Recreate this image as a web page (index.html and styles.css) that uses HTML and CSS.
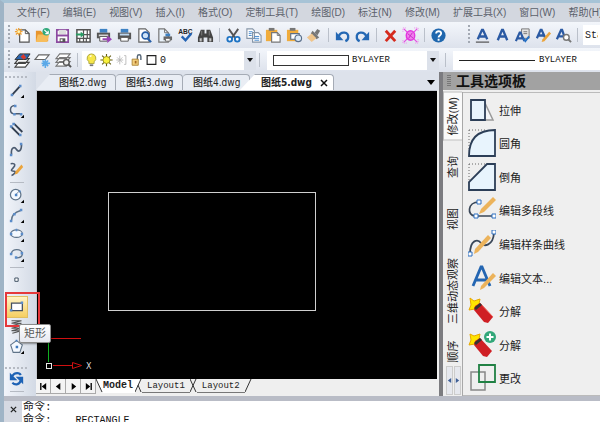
FILE: index.html
```html
<!DOCTYPE html>
<html lang="zh-CN">
<head>
<meta charset="utf-8">
<title>CAD</title>
<link rel="stylesheet" href="styles.css">
</head>
<body>
<div class="app">
  <nav class="menu">
    <a href="#">文件(F)</a><a href="#">编辑(E)</a><a href="#">视图(V)</a><a href="#">插入(I)</a><a href="#">格式(O)</a><a href="#">定制工具(T)</a><a href="#">绘图(D)</a><a href="#">标注(N)</a><a href="#">修改(M)</a><a href="#">扩展工具(X)</a><a href="#">窗口(W)</a><a href="#">帮助(H)</a>
  </nav>

  <div class="toolbar">
    <span class="grip"></span>
    <div class="group g10">
      <button aria-label="新建"><svg viewBox="0 0 18 18"><path d="M6 3h6l4 4v9H6z" fill="#fff" stroke="#555" stroke-width="1.3"/><path d="M12 3v4h4" fill="none" stroke="#555"/><path d="M5 1v8M1 5h8M2 2l6 6M8 2L2 8" stroke="#f0a030" stroke-width="1.3"/><circle cx="5" cy="5" r="1.5" fill="#fff3b0"/></svg></button>
      <button aria-label="打开"><svg viewBox="0 0 18 18"><path d="M2 4h5l2 2h6v9H2z" fill="#e8952c"/><path d="M4 8h12l-2 8H2z" fill="#f7bd5c"/><circle cx="13" cy="5" r="4" fill="#2fa87a"/><path d="M11 3l4 4M15 4v3h-3" stroke="#fff" stroke-width="1.3" fill="none"/></svg></button>
      <button aria-label="保存"><svg viewBox="0 0 18 18"><path d="M3 3h12v13H3z" fill="#fff" stroke="#8c4aa0" stroke-width="1.8"/><path d="M5 3h8v5H5z" fill="#ddd"/><path d="M3 9h12" stroke="#8c4aa0" stroke-width="2"/><path d="M6 12h6v4H6z" fill="#555"/><path d="M7 13h2v2H7z" fill="#fff"/></svg></button>
      <button aria-label="图纸"><svg viewBox="0 0 18 18"><path d="M2 3h14v13H2z" fill="#fff" stroke="#555" stroke-width="1.6"/><path d="M9 3v13M2 12h14M12 12v4M5 12v4M13 3v9M9 8h7" stroke="#555" stroke-width="1.3"/><path d="M1 7h5V5l4 3-4 3V9H1z" fill="#299b63"/></svg></button>
      <button aria-label="输出"><svg viewBox="0 0 18 18"><path d="M5 2h8v4H5z" fill="#3d82c4"/><path d="M2 6h14v6H2z" fill="#555"/><path d="M4 8h10v2H4z" fill="#ddd"/><path d="M5 10h8v5H5z" fill="#fff" stroke="#555"/><path d="M8 12h5v-3l5 4-5 4v-3H8z" fill="#9a43b6"/></svg></button>
      <button aria-label="打印"><svg viewBox="0 0 18 18"><path d="M5 2h8v4H5z" fill="#3d82c4"/><path d="M2 6h14v7H2z" fill="#555"/><path d="M4 7h10v2H4z" fill="#bcd7ef"/><path d="M5 11h8v4H5z" fill="#fff" stroke="#555"/></svg></button>
      <button aria-label="打印预览"><svg viewBox="0 0 18 18"><path d="M3 2h7l4 4v10H3z" fill="#fff" stroke="#666" stroke-width="1.3"/><circle cx="10" cy="9" r="3.6" fill="#cfe4f8" stroke="#275fa8" stroke-width="1.7"/><path d="M12 12l4 4" stroke="#275fa8" stroke-width="2.2"/></svg></button>
      <button aria-label="页面设置"><svg viewBox="0 0 18 18"><path d="M3 2h6l4 4v10H3z" fill="#eaf3fb" stroke="#777" stroke-width="1.3"/><path d="M9 2v4h4" fill="none" stroke="#777"/><path d="M10 7h5v3h-5z" fill="#3d82c4"/><path d="M8 10h9v4H8z" fill="#666"/><path d="M10 12h5v3h-5z" fill="#fff" stroke="#666"/></svg></button>
      <button aria-label="拼写检查"><svg viewBox="0 0 18 18"><text x="9" y="7" class="abc">ABC</text><path d="M5 10l4 4 6-7" fill="none" stroke="#2464b4" stroke-width="2.5"/></svg></button>
      <button aria-label="查找"><svg viewBox="0 0 18 18"><path d="M4 3h4v4h2V3h4l3 8v5h-6v-5H7v5H1v-5z" fill="#444"/><path d="M3 12h2v3H3zM13 12h2v3h-2zM5 4v5M13 4v5" fill="#ddd" stroke="#999" stroke-width=".7"/></svg></button>
    </div>
    <span class="sep"></span>
    <div class="group g5">
      <button aria-label="剪切"><svg viewBox="0 0 18 18"><path d="M4 2l7 10M14 2L7 12" stroke="#555" stroke-width="2"/><circle cx="5" cy="13" r="2.5" fill="#fff" stroke="#1f74c4" stroke-width="2"/><circle cx="13" cy="13" r="2.5" fill="#fff" stroke="#1f74c4" stroke-width="2"/></svg></button>
      <button aria-label="复制"><svg viewBox="0 0 18 18"><path d="M2 2h6l2 2v8H2zM8 6h6l3 3v7H8z" fill="#fff" stroke="#8796a8" stroke-width="1.2"/><path d="M4 5h4M4 7h3M4 9h3M10 10h5M10 12h5M10 14h5" stroke="#4287cc"/></svg></button>
      <button aria-label="粘贴"><svg viewBox="0 0 18 18"><path d="M1 3h12v12H1z" fill="#f0ac3c"/><path d="M4 1h6v3H4z" fill="#777"/><path d="M7 6h6l3 3v7H7z" fill="#fff" stroke="#777" stroke-width="1.2"/><path d="M13 6v3h3" fill="none" stroke="#777"/></svg></button>
      <button aria-label="选择性粘贴"><svg viewBox="0 0 18 18"><path d="M1 3h12v12H1z" fill="#f0ac3c"/><path d="M4 1h6v3H4z" fill="#777"/><path d="M5 7h9v6H5z" fill="#fff" stroke="#5a6f8a" stroke-width="1.2"/><circle cx="13" cy="12" r="3.5" fill="#dbe9f7" stroke="#5a6f8a" stroke-width="1.2"/></svg></button>
      <button aria-label="格式刷"><svg viewBox="0 0 18 18"><path d="M12 2l3 2-3 5-3-3z" fill="#777"/><path d="M7 4l7 7-3 2-6-6z" fill="#777"/><path d="M6 7l5 5-5 4-5-5z" fill="#efc58c"/></svg></button>
    </div>
    <span class="sep"></span>
    <div class="group g2">
      <button aria-label="撤销"><svg viewBox="0 0 18 18"><path d="M5 10c2-6 11-5 10 1 0 2-1 3-3 4" fill="none" stroke="#2468b4" stroke-width="2.5"/><path d="M2 5v9h8z" fill="#2468b4"/></svg></button>
      <button aria-label="重做"><svg viewBox="0 0 18 18"><path d="M13 10C11 4 2 5 3 11c0 2 1 3 3 4" fill="none" stroke="#2468b4" stroke-width="2.5"/><path d="M16 5v9H8z" fill="#2468b4"/></svg></button>
    </div>
    <span class="sep"></span>
    <div class="group g2">
      <button aria-label="删除"><svg viewBox="0 0 18 18"><path d="M4 4l10 11M14 4L4 15" stroke="#d52b1e" stroke-width="3"/></svg></button>
      <button aria-label="清理"><svg viewBox="0 0 18 18"><path d="M2 2l14 14M16 2L2 16" stroke="#e64be4" stroke-width="1.3"/><ellipse cx="9" cy="9" rx="4.500" ry="5" fill="#ef7fec" stroke="#e336df" stroke-width="1.5"/><path d="M6 7l6 5M7 12l4-6" stroke="#c92ac6"/><path d="M1 5V1h4M13 1h4v4M17 13v4h-4M5 17H1v-4" fill="none" stroke="#ef7fec" stroke-dasharray="1 1"/></svg></button>
    </div>
    <span class="sep"></span>
    <div class="group g1">
      <button aria-label="帮助"><svg viewBox="0 0 18 18"><circle cx="9" cy="9" r="7.5" fill="#1f67ae"/><path d="M6.500 7c0-3.500 5.500-3.300 5.300 0 0 2-2.700 2-2.700 4M9.100 12.500v2" fill="none" stroke="#fff" stroke-width="2"/></svg></button>
    </div>
    <span class="grip grip-far"></span>
    <div class="group g5">
      <button aria-label="文字"><svg viewBox="0 0 18 18"><path d="M4 13L8.500 3h1L14 13M6 10h6" fill="none" stroke="#2b5aa3" stroke-width="2.5"/><path d="M2 16h14" stroke="#555" stroke-width="1.3"/></svg></button>
      <button aria-label="单行文字"><svg viewBox="0 0 18 18"><path d="M4 14L8.500 3h1L14 14M6 10h6" fill="none" stroke="#2b5aa3" stroke-width="2.500"/></svg></button>
      <button aria-label="文字样式"><svg viewBox="0 0 18 18"><path d="M8 2h8v10H8z" fill="#e4e4e4" stroke="#777"/><path d="M10 5h4M10 7h4" stroke="#777"/><path d="M2 15L6 6h1l4 9M4 12h5" fill="none" stroke="#2b5aa3" stroke-width="2.3"/><path d="M10 12l2 3 4-5" fill="none" stroke="#2670c4" stroke-width="2"/></svg></button>
      <button aria-label="编辑文字"><svg viewBox="0 0 18 18"><path d="M2 12L6 3h1l4 9M4 9h5" fill="none" stroke="#2b5aa3" stroke-width="2.4"/><path d="M15 5l2 2-7 8-3 1 1-3z" fill="#eba43c"/></svg></button>
      <button aria-label="查找文字"><svg viewBox="0 0 18 18"><path d="M2 13L6.500 3h1L11 13M4 10h6" fill="none" stroke="#2b5aa3" stroke-width="2.4"/><circle cx="12" cy="11" r="3" fill="#fff" stroke="#777" stroke-width="1.5"/><path d="M14 13l3 3" stroke="#777" stroke-width="2"/></svg></button>
    </div>
    <span class="sep"></span>
    <input class="style-box" aria-label="文字样式名称" value="Standard">
  </div>

  <div class="toolbar toolbar-props">
    <span class="grip"></span>
    <div class="group g3">
      <button aria-label="图层"><svg viewBox="0 0 18 18"><path d="M5 11h11l-4 5H1zM5 7h11l-4 5H1z" fill="#fff" stroke="#444" stroke-width="1.2"/><path d="M6 2h11l-4 6H1z" fill="#2b65ad" stroke="#333"/><path d="M7 5l3-3 3 4-3 2z" fill="#d83a2c"/></svg></button>
      <button aria-label="冻结图层"><svg viewBox="0 0 18 18"><path d="M5 3h11l-4 5H1z" fill="#fff" stroke="#666" stroke-width="1.2"/><path d="M12 8v9M8 12h9M9 9l6 6M15 9l-6 6" stroke="#5aa8e8" stroke-width="1.7"/></svg></button>
      <button aria-label="图层浏览"><svg viewBox="0 0 18 18"><path d="M5 10h11l-4 5H1zM5 6h11l-4 5H1zM5 2h11l-4 5H1z" fill="#fff" stroke="#777" stroke-width="1.2"/><circle cx="12" cy="11" r="3" fill="#eee" stroke="#555" stroke-width="1.4"/><path d="M14 13l3 3" stroke="#555" stroke-width="2"/></svg></button>
    </div>
    <span class="sep"></span>
    <div class="combo combo-layer">
      <svg viewBox="0 0 14 16"><path d="M7 1a5 5 0 0 1 3 9v2H4v-2a5 5 0 0 1 3-9z" fill="#f6e64a" stroke="#a8a23c"/><path d="M5 13h4v2H5z" fill="#777"/><path d="M5 4l2-1" stroke="#fff" stroke-width="1.5"/></svg>
      <svg viewBox="0 0 14 16"><path d="M7 1v14M0 8h14M2 3l10 10M12 3L2 13" stroke="#665f16" stroke-width="1.3"/><circle cx="7" cy="8" r="4" fill="#f8f13c" stroke="#9b931c"/></svg>
      <svg viewBox="0 0 14 16"><path d="M5 3v10M1 8h8M2 5l6 6M8 5l-6 6M10 3h2v10h-2" fill="none" stroke="#b7b7b7"/></svg>
      <svg viewBox="0 0 14 16"><path d="M8 8V4q0-2 2-2t2 2v4" fill="none" stroke="#567" stroke-width="1.6"/><path d="M2 7h7v7H2z" fill="#f3cf7d" stroke="#a88135"/><path d="M5 9h2v3H5z" fill="#a66a24"/></svg>
      <svg viewBox="0 0 14 16"><path d="M2 3h10v10H2z" fill="#fff" stroke="#222" stroke-width="1.300"/></svg>
      <select aria-label="当前图层"><option>0</option></select>
      <span class="drop"></span>
    </div>
    <span class="sep"></span>
    <div class="combo combo-color">
      <span class="swatch"></span>
      <select aria-label="颜色"><option>BYLAYER</option></select>
      <span class="drop"></span>
    </div>
    <span class="sep"></span>
    <div class="combo combo-line">
      <span class="stroke"></span>
      <select aria-label="线型"><option>BYLAYER</option></select>
    </div>
  </div>

  <div class="workspace">
    <aside class="draw-bar">
      <span class="hgrip"></span>
      <div class="stack s5">
        <button aria-label="直线"><svg viewBox="0 0 18 18"><path d="M4 14L13 4" stroke="#333f50" stroke-width="2.200"/><path d="M2 13h3v3H2zM12 2h3v3h-3z" fill="#5b8cc9"/><path d="M18 14v4h-4z"/></svg></button>
        <button aria-label="多段线"><svg viewBox="0 0 18 18"><path d="M7 3C0 3 0 13 7 13h8" fill="none" stroke="#4c5b70" stroke-width="1.800"/><path d="M6 2h3v3H6zM5 12h3v3H5zM13 12h3v3h-3z" fill="#5b8cc9"/><path d="M18 14v4h-4z"/></svg></button>
        <button aria-label="双线"><svg viewBox="0 0 18 18"><path d="M3 6l10 10M6 2l10 10" stroke="#333f50" stroke-width="2.200"/><path d="M1 4h3v3H1zM4 1h3v3H4zM12 14h3v3h-3z" fill="#5b8cc9"/></svg></button>
        <button aria-label="样条曲线"><svg viewBox="0 0 18 18"><path d="M3 15C2 5 7 6 9 9s6 3 6-6" fill="none" stroke="#4c5b70" stroke-width="2"/><path d="M1 14h3v3H1zM13 1h3v3h-3z" fill="#5b8cc9"/></svg></button>
        <button aria-label="手画线"><svg viewBox="0 0 18 18"><path d="M2 2c6-1 6 2 3 5s-3 4 1 4-1 5-3 5" fill="none" stroke="#4c5b70" stroke-width="1.900"/><path d="M15 3l2 3-7 8-3 1 1-4z" fill="#eba43c"/></svg></button>
      </div>
      <span class="hsep"></span>
      <div class="stack s4">
        <button aria-label="圆"><svg viewBox="0 0 18 18"><circle cx="8" cy="8" r="6.300" fill="#f4f9ff" stroke="#607489" stroke-width="1.500"/><path d="M8 8l4-4" stroke="#607489"/><path d="M7 7h3v3H7zM12 3h2v2h-2z" fill="#4d84c5"/><path d="M18 14v4h-4z"/></svg></button>
        <button aria-label="圆弧"><svg viewBox="0 0 18 18"><path d="M3 15C3 9 7 5 14 3" fill="none" stroke="#607489" stroke-width="1.700"/><path d="M1 14h3v3H1zM5 6h3v3H5zM13 1h3v3h-3z" fill="#5b8cc9"/><path d="M18 14v4h-4z"/></svg></button>
        <button aria-label="椭圆"><svg viewBox="0 0 18 18"><ellipse cx="9" cy="8" rx="7" ry="4.500" fill="#f4f9ff" stroke="#607489" stroke-width="1.500"/><path d="M1 7h3v3H1zM14 7h3v3h-3zM8 2h2v3H8z" fill="#5b8cc9"/><path d="M18 14v4h-4z"/></svg></button>
        <button aria-label="椭圆弧"><svg viewBox="0 0 18 18"><path d="M3 8c0-7 13-6 13 0 0 4-3 5-7 5" fill="none" stroke="#607489" stroke-width="1.600"/><path d="M1 7h3v3H1zM14 6h3v3h-3zM7 11h3v3H7z" fill="#5b8cc9"/><path d="M18 14v4h-4z"/></svg></button>
      </div>
      <span class="hsep"></span>
      <div class="stack s1">
        <button aria-label="点"><svg viewBox="0 0 18 18"><path d="M7 6h4v4H7z" fill="#fff" stroke="#456" stroke-width="1.200"/></svg></button>
      </div>
      <span class="hsep"></span>
      <div class="stack s3">
        <button class="active" aria-label="矩形"><svg viewBox="0 0 18 18"><path d="M3 5h13v9H3z" fill="#fdfdff" stroke="#444f60" stroke-width="1.500"/><path d="M1 12h3v3H1zM14 3h3v3h-3z" fill="#5b8cc9"/></svg></button>
        <button aria-label="螺旋"><svg viewBox="0 0 18 18"><path d="M3 2h12L3 5h12L3 8h12L3 11h12L3 14h12L4 17" fill="none" stroke="#555" stroke-width="1.300"/></svg></button>
        <button aria-label="正多边形"><svg viewBox="0 0 18 18"><path d="M9 2l7 5-3 9H5L2 7z" fill="#f4f9ff" stroke="#607489" stroke-width="1.300"/><path d="M8 8h3v3H8zM8 1h2v2H8z" fill="#3f79bd"/><path d="M18 14v4h-4z"/></svg></button>
      </div>
      <span class="hgrip"></span>
      <div class="stack s1">
        <button aria-label="刷新"><svg viewBox="0 0 18 18"><path d="M4 6c3-5 9-4 10-1M14 12c-2 5-7 5-10 2" fill="none" stroke="#1d62b5" stroke-width="2.600"/><path d="M1 2v9h9zM17 16V7H8z" fill="#1d62b5"/></svg></button>
      </div>
      <span class="hsep"></span>
      <span class="callout"></span>
      <span class="tip" role="tooltip">矩形</span>
    </aside>

    <main class="document">
      <div class="doc-tabs">
        <a href="#" class="doc-tab">图纸2.dwg</a><a href="#" class="doc-tab">图纸3.dwg</a><a href="#" class="doc-tab">图纸4.dwg</a><a href="#" class="doc-tab current">图纸5.dwg <svg viewBox="0 0 8 8"><path d="M1 1l6 6M7 1L1 7" stroke="#111" stroke-width="1.500"/></svg></a>
        <button class="more" aria-label="更多图纸"><svg viewBox="0 0 8 5"><path d="M0 0h8L4 5z"/></svg></button>
      </div>
      <div class="canvas">
        <svg width="401" height="288" viewBox="0 0 401 288" shape-rendering="crispEdges">
          <path d="M71.500 101.500h207v118h-207z" fill="none" stroke="#d0d0d0"/>
          <path d="M12 247.500h32M16 274.500h20" stroke="#d01010"/>
          <path d="M35.500 271.500l9 3-9 3z" fill="none" stroke="#d01010" shape-rendering="auto"/>
          <path d="M11.500 249v22" stroke="#10b020"/>
          <path d="M9.500 272.500h5v5h-5z" fill="none" stroke="#e8e8e8"/>
          <text x="49" y="278" class="axis">X</text>
        </svg>
      </div>
      <div class="sheet-bar">
        <div class="nav-buttons">
          <button aria-label="第一个"><svg viewBox="0 0 10 10"><path d="M2 1v8" stroke="#000" stroke-width="1.500"/><path d="M8 1v8L3 5z"/></svg></button>
          <button aria-label="上一个"><svg viewBox="0 0 10 10"><path d="M7 1v8L2 5z"/></svg></button>
          <button aria-label="下一个"><svg viewBox="0 0 10 10"><path d="M3 1v8l5-4z"/></svg></button>
          <button aria-label="最后一个"><svg viewBox="0 0 10 10"><path d="M8 1v8" stroke="#000" stroke-width="1.500"/><path d="M2 1v8l5-4z"/></svg></button>
        </div>
        <svg class="slant" viewBox="0 0 7 14"><path d="M0 0h7v14z" fill="#fff"/><path d="M0 0l6 13" stroke="#333"/></svg>
        <a href="#" class="sheet on">Model</a>
        <svg class="slant" viewBox="0 0 7 14"><path d="M0 0h6L1 13H0z" fill="#fff"/><path d="M6 0L0 13M3 6l3 7" stroke="#333"/></svg>
        <a href="#" class="sheet">Layout1</a>
        <svg class="slant" viewBox="0 0 7 14"><path d="M0 0l6 13M6 0L0 13" stroke="#333"/></svg>
        <a href="#" class="sheet">Layout2</a>
        <svg class="slant" viewBox="0 0 7 14"><path d="M6 0L0 13" stroke="#333"/></svg>
      </div>
    </main>

    <aside class="palette">
      <h1><span class="bars"></span>工具选项板</h1>
      <div class="palette-body">
        <div class="side-tabs">
          <button class="side-tab chosen">修改(M)</button>
          <button class="side-tab">查询</button>
          <button class="side-tab">视图</button>
          <button class="side-tab">三维动态观察</button>
          <button class="side-tab">顺序</button>
          <div class="scrollers">
            <button aria-label="向左"><svg viewBox="0 0 6 8"><path d="M5 1v6L1 4z" fill="#3f5f96"/></svg></button>
            <button aria-label="向右"><svg viewBox="0 0 6 8"><path d="M1 1v6l4-3z" fill="#3f5f96"/></svg></button>
          </div>
        </div>
        <div class="tools">
          <button><svg viewBox="0 0 28 28"><path d="M16 5l9 19h-9" fill="#f4f6f8" stroke="#999" stroke-width="1.500"/><path d="M3 4h14v20H3z" fill="#e8f4fd" stroke="#2c3e57" stroke-width="1.800"/></svg>拉伸</button>
          <button><svg viewBox="0 0 28 28"><path d="M1 1h18M1 1v20" stroke="#666" stroke-dasharray="1 2"/><path d="M27 1v26H1C1 11 9 1 27 1z" fill="#e8f4fd" stroke="#2c3e57" stroke-width="1.800"/></svg>圆角</button>
          <button><svg viewBox="0 0 28 28"><path d="M1 1h18M1 1v20" stroke="#666" stroke-dasharray="1 2"/><path d="M27 1v26H1v-8L19 1z" fill="#e8f4fd" stroke="#2c3e57" stroke-width="1.800"/></svg>倒角</button>
          <button><svg viewBox="0 0 28 28"><path d="M11 6C-1 6-1 20 7 20h18" fill="none" stroke="#3a4758" stroke-width="1.700"/><path d="M9 4h4v4H9zM6 18h4v4H6zM24 18h4v4h-4z" fill="#fff" stroke="#2c6fc0"/><path d="M25 1l3 3-12 12-5 2 2-5z" fill="#ecb35b"/></svg>编辑多段线</button>
          <button><svg viewBox="0 0 28 28"><path d="M2 24C2 9 10 9 13 13s12 3 13-10" fill="none" stroke="#3a4758" stroke-width="1.800"/><path d="M0 22h4v4H0zM24 0h4v4h-4z" fill="#fff" stroke="#2c6fc0"/><path d="M20 5l3 3L10 22l-4 2 1-5z" fill="#ecb35b"/></svg>编辑样条曲线</button>
          <button><svg viewBox="0 0 28 28"><path d="M5 22L13 3h1l8 19M8 16h11" fill="none" stroke="#2466b2" stroke-width="2.800"/><path d="M25 9l3 3-12 12-4 2 1-4z" fill="#ecb35b"/></svg>编辑文本...</button>
          <button><svg viewBox="0 0 28 28"><path d="M2 1l4 3 6-2-1 5-4 5-6 1 2-5z" fill="#ffe500" stroke="#e8a800"/><path d="M7 9l5-3 13 14-5 6-4-1L6 13z" fill="#cf1f24"/><path d="M12 6l13 14" stroke="#ed5950"/><path d="M6 11l6-5 2 2-6 5z" fill="#333"/></svg>分解</button>
          <button><svg viewBox="0 0 28 28"><path d="M2 3l4 2 6-2-1 5-4 5-6 1 2-5z" fill="#ffe500" stroke="#e8a800"/><path d="M7 10l5-3 12 13-5 6-4-1L6 14z" fill="#cf1f24"/><path d="M6 12l6-5 2 2-6 5z" fill="#333"/><circle cx="22" cy="6" r="6" fill="#32a779"/><path d="M18.500 6h7M22 2.500v7" stroke="#fff" stroke-width="2"/></svg>分解</button>
          <button><svg viewBox="0 0 28 28"><path d="M3 8h14v18H3z" fill="none" stroke="#888" stroke-width="1.500"/><path d="M11 1h16v17H11z" fill="none" stroke="#218144" stroke-width="1.800"/></svg>更改</button>
        </div>
      </div>
    </aside>
  </div>

  <section class="command">
    <button class="close" aria-label="关闭命令行"><svg viewBox="0 0 8 8"><path d="M1 1l6 6M7 1L1 7" stroke="#222" stroke-width="1.500"/></svg></button>
    <pre><span class="prompt">命令:</span>
<span class="prompt">命令:</span>   _RECTANGLE</pre>
  </section>
</div>
</body>
</html>
```
FILE: styles.css
```css
* { box-sizing: border-box; }
body { margin: 0; font-family: "Liberation Sans", "Noto Sans CJK SC", sans-serif; color: #222; }
a { color: inherit; text-decoration: none; }
button { border: 0; padding: 0; background: none; font: inherit; color: inherit; display: flex; align-items: center; justify-content: center; }
svg { display: block; flex: none; }

.app {
  height: 100vh; display: flex; flex-direction: column; overflow: hidden;
  border-top: 3px solid #a7c3d6; border-left: 4px solid #9fb4c6; background: #d5dae3;
}
.menu {
  display: flex; gap: 13px; align-items: center; height: 19px; flex: none; padding-left: 13px;
  white-space: nowrap; font-size: 10px; line-height: 14px; color: #5b616b; background: #d3d7df;
}

.toolbar {
  display: flex; align-items: center; flex: none; height: 26px; padding-left: 4px;
  background: linear-gradient(#f3f6fb, #dde2ec); overflow: hidden;
}
.toolbar-props { height: 24px; }
.group, .stack { display: grid; flex: none; }
.group { grid-auto-flow: column; grid-auto-columns: 1fr; }
.group svg { width: 17px; height: 17px; }
.g10 { width: 204px; }
.g5 { width: 102px; }
.g3 { width: 62px; }
.g2 { width: 41px; }
.g1 { width: 20px; }
.sep { flex: none; width: 1px; height: 14px; margin: 0 3px; background: #bac0ca; }
.grip { flex: none; width: 2px; height: 20px; margin-right: 2px; background: repeating-linear-gradient(#a3a9b3 0 2px, transparent 2px 4px); }
.grip-far { margin-left: 20px; }
.abc { font: bold 7px "Liberation Sans", sans-serif; text-anchor: middle; fill: #222; }
.style-box { flex: 1; min-width: 0; height: 20px; margin-left: 2px; padding: 0 2px; border: 0; background: #fff; font: 10px "Liberation Mono", monospace; color: #222; }

.combo { display: flex; align-items: center; height: 19px; flex: none; background: #fff; }
.combo svg { width: 13px; height: 14px; margin-right: 2px; }
.combo select { flex: 1; min-width: 0; appearance: none; border: 0; padding: 0; background: none; font: 9px "Liberation Mono", monospace; color: #111; }
.combo-layer { width: 174px; padding-left: 3px; margin-left: 1px; }
.combo-layer select { font-size: 10px; }
.combo-color { width: 172px; padding-left: 6px; margin: 0 3px 0 4px; }
.combo-line { flex: 1; padding-left: 6px; margin-left: 4px; }
.drop { flex: none; width: 12px; height: 19px; display: grid; place-items: center; background: #dce1ea; }
.drop::before { content: ""; border: 3px solid transparent; border-top: 4px solid #111; border-bottom: 0; }
.swatch { width: 76px; height: 11px; margin-right: 3px; border: 1px solid #333; }
.stroke { width: 76px; height: 1px; margin-right: 4px; background: #222; }

.workspace { flex: 1; min-height: 0; display: flex; }
.draw-bar {
  position: relative; width: 32px; flex: none; display: flex; flex-direction: column; align-items: center;
  padding: 4px 7px 0 0; background: linear-gradient(90deg, #f1f4fa, #d3dae5);
}
.stack { width: 20px; grid-auto-rows: 1fr; flex: none; }
.stack svg { width: 15px; height: 15px; }
.s5 { height: 98px; }
.s4 { height: 78px; }
.s3 { height: 59px; }
.s1 { height: 19px; }
.hgrip { flex: none; width: 24px; height: 2px; margin: 0 0 3px; background: repeating-linear-gradient(90deg, #b5bac3 0 2px, transparent 2px 4px); }
.hsep { flex: none; width: 14px; height: 1px; margin: 3px 0; background: #b5bac3; }
.s3 + .hgrip { margin: 11px 0 0; }
.active { background: linear-gradient(#fff3c4, #f5cf62); outline: 1px solid #e0bf62; }
.callout { position: absolute; left: 1px; top: 220px; width: 35px; height: 35px; border: 2px solid #e5383b; z-index: 2; }
.tip {
  position: absolute; left: 15px; top: 252px; z-index: 3; padding: 0 4px; border: 1px solid #8b8b8b; border-radius: 2px;
  background: linear-gradient(#fff, #e6e8f0); font-size: 11px; line-height: 17px; color: #555; white-space: nowrap; box-shadow: 1px 1px 2px #0006;
}

.document { flex: 1; min-width: 0; display: flex; flex-direction: column; background: #efefef; }
.doc-tabs {
  display: flex; align-items: flex-end; height: 18px; flex: none; background: #dde2eb;
  font: 10px "DejaVu Sans Condensed", "DejaVu Sans", "Noto Sans CJK SC", sans-serif;
}
.doc-tab {
  width: 67px; height: 16px; flex: none; padding-left: 10px; line-height: 15px; white-space: nowrap;
  background: #e9edf4; border: 1px solid #a5abb5; border-width: 1px 1px 0 0; border-radius: 4px 4px 0 0; font-weight: 500;
}
.doc-tab:first-child { width: 80px; padding-left: 23px; clip-path: polygon(14px 0, 100% 0, 100% 100%, 0 100%); }
.doc-tab.current {
  width: 94px; margin-left: -10px; padding-left: 21px; display: flex; align-items: center; gap: 8px;
  background: #fff; font-weight: bold; clip-path: polygon(15px 0, 100% 0, 100% 100%, 0 100%);
}
.doc-tab svg { width: 8px; height: 8px; }
.more { margin: 0 4px 5px auto; }
.more svg { width: 8px; height: 5px; }
.canvas { flex: 1; min-height: 0; margin-right: 2px; border: solid #c4c8d0; border-width: 1px 0 0 1px; background: #000; overflow: hidden; }
.axis { font: 8px "DejaVu Sans", sans-serif; fill: #ddd; }
.sheet-bar { display: flex; height: 17px; flex: none; align-items: flex-start; }
.nav-buttons { display: grid; grid-template-columns: repeat(4, 15px); height: 15px; }
.nav-buttons button { border: 1px solid #aaa; border-width: 0 1px 1px 0; background: #f4f4f4; }
.nav-buttons svg { width: 9px; height: 9px; }
.slant { width: 7px; height: 14px; }
.sheet { height: 14px; padding: 0 5px; border-bottom: 1px solid #777; font: 9px/14px "Liberation Mono", monospace; }
.on { padding: 0 2px 0 0; background: #fff; border-color: #fff; font-size: 10px; font-weight: bold; }

.palette { flex: none; width: 27%; min-width: 159px; display: flex; flex-direction: column; border-left: 4px solid #7c7c80; background: #efefef; }
.palette h1 { display: flex; align-items: center; gap: 5px; margin: 0; height: 18px; flex: none; padding-left: 4px; background: #a2a2a2; font-size: 14px; line-height: 18px; color: #111; }
.bars { width: 4px; height: 12px; background: repeating-linear-gradient(#777 0 1px, transparent 1px 2px); }
.palette-body { flex: 1; min-height: 0; display: flex; padding-top: 2px; }
.side-tabs { width: 20px; flex: none; display: flex; flex-direction: column; border-right: 1px solid #a8a8a8; }
.side-tab {
  flex: none; width: 19px; min-height: 52px; padding: 13px 0; writing-mode: vertical-rl; text-orientation: sideways;
  transform: rotate(180deg); font-size: 11px; line-height: 16px; white-space: nowrap;
}
.chosen { min-height: 46px; padding: 4px 0; background: #fafafa; border: 1px solid #bbb; border-left: 0; }
.side-tab:nth-child(5) { flex: 1; min-height: 0; padding: 0; }
.scrollers { display: flex; gap: 1px; height: 29px; flex: none; padding-left: 3px; margin-bottom: 1px; }
.scrollers button { width: 7px; border: 1px solid #ccc; background: #e6e8ee; }
.scrollers svg { width: 5px; height: 7px; }
.tools { flex: 1; min-width: 0; display: grid; grid-auto-rows: 1fr; border: solid #bbb; border-width: 1px 0; }
.tools button { justify-content: flex-start; gap: 3px; min-height: 0; padding-left: 5px; font-size: 11px; color: #222; white-space: nowrap; }
.tools svg { width: 28px; height: 28px; }

.command { display: flex; flex: none; height: 26px; border-top: 5px solid #b9bcc6; background: #fff; overflow: hidden; }
.close { width: 18px; flex: none; align-items: flex-start; padding-top: 5px; background: #d5d9e2; }
.close svg { width: 7px; height: 7px; }
.command pre { margin: 0; padding-left: 1px; font: 10px/12px "Liberation Mono", "Noto Sans CJK SC", monospace; color: #111; }
.prompt { font-size: 11px; }
```
